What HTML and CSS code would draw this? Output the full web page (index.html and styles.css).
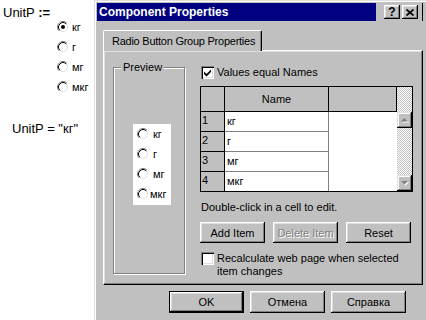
FILE: index.html
```html
<!DOCTYPE html>
<html lang="ru">
<head>
    <meta charset="UTF-8">
    <meta name="viewport" content="width=device-width, initial-scale=1.0">
    <title>Component Properties</title>
    <link rel="stylesheet" href="styles.css">
</head>
<body>
    <!-- shared glyphs -->
    <svg class="defs" width="0" height="0" aria-hidden="true">
        <symbol id="radio" viewBox="0 0 12 12">
            <circle cx="6" cy="6" r="5.5" fill="#fff" stroke="#fff"/>
            <path d="M2.11 9.89A5.5 5.5 0 0 1 9.89 2.11" fill="none" stroke="#808080"/>
            <circle cx="6" cy="6" r="4.5" fill="none" stroke="#dfdfdf"/>
            <path d="M2.82 9.18A4.5 4.5 0 0 1 9.18 2.82" fill="none" stroke="#000"/>
        </symbol>
        <symbol id="radio-on" viewBox="0 0 12 12">
            <use href="#radio"/>
            <circle cx="6" cy="6" r="2" fill="#000"/>
        </symbol>
        <symbol id="tick" viewBox="0 0 9 9">
            <path d="M1 3.5L3.5 6L8 1.5V4L3.5 8.5L1 6Z" fill="#000"/>
        </symbol>
    </svg>

    <div class="sheet">
        <!-- worksheet regions -->
        <div class="region region-def">UnitP <b>:=</b></div>

        <div class="region region-radios">
            <div class="opt"><svg class="radio"><use href="#radio-on"/></svg><span>кг</span></div>
            <div class="opt"><svg class="radio"><use href="#radio"/></svg><span>г</span></div>
            <div class="opt"><svg class="radio"><use href="#radio"/></svg><span>мг</span></div>
            <div class="opt"><svg class="radio"><use href="#radio"/></svg><span>мкг</span></div>
        </div>

        <div class="region region-result">UnitP = "кг"</div>

        <!-- properties dialog -->
        <div class="dialog">
            <div class="titlebar">
                <div class="caption">Component Properties</div>
                <div class="caption-buttons">
                    <span class="cap-btn">?</span>
                    <span class="cap-btn">
                        <svg width="8" height="7" viewBox="0 0 8 7"><path d="M0.5 0.5L7.5 6.5M7.5 0.5L0.5 6.5" stroke="#000" stroke-width="1.7"/></svg>
                    </span>
                </div>
            </div>

            <div class="tabs">
                <div class="tab">Radio Button Group Properties</div>
            </div>

            <div class="panel">
                <fieldset class="group">
                    <legend>Preview</legend>
                    <div class="preview-box">
                        <div class="p-opt"><svg class="radio"><use href="#radio"/></svg><span>кг</span></div>
                        <div class="p-opt"><svg class="radio"><use href="#radio"/></svg><span>г</span></div>
                        <div class="p-opt"><svg class="radio"><use href="#radio"/></svg><span>мг</span></div>
                        <div class="p-opt p-opt-wide"><svg class="radio"><use href="#radio"/></svg><span>мкг</span></div>
                    </div>
                </fieldset>

                <div class="settings">
                    <div class="check">
                        <span class="box"><svg width="9" height="9"><use href="#tick"/></svg></span>
                        <span>Values equal Names</span>
                    </div>

                    <div class="grid">
                        <div class="table">
                            <div class="hd"></div>
                            <div class="hd">Name</div>
                            <div class="hd"></div>

                            <div class="num">1</div>
                            <div class="name">кг</div>
                            <div class="blank"></div>

                            <div class="num">2</div>
                            <div class="name">г</div>
                            <div class="blank"></div>

                            <div class="num">3</div>
                            <div class="name">мг</div>
                            <div class="blank"></div>

                            <div class="num last">4</div>
                            <div class="name last">мкг</div>
                            <div class="blank"></div>
                        </div>
                        <div class="vscroll">
                            <div class="sb-space"></div>
                            <div class="sb-btn">
                                <svg width="8" height="5" viewBox="0 0 8 5"><path d="M4.5 1L8 4.5H1Z" fill="#fff"/><path d="M3.5 0L7 3.5H0Z" fill="#808080"/></svg>
                            </div>
                            <div class="sb-track"></div>
                            <div class="sb-btn">
                                <svg width="8" height="5" viewBox="0 0 8 5"><path d="M1 1H8L4.5 4.5Z" fill="#fff"/><path d="M0 0H7L3.5 3.5Z" fill="#808080"/></svg>
                            </div>
                        </div>
                    </div>

                    <p class="hint">Double-click in a cell to edit.</p>

                    <div class="row-buttons">
                        <button class="btn">Add Item</button>
                        <button class="btn" disabled>Delete Item</button>
                        <button class="btn">Reset</button>
                    </div>

                    <div class="check check-multi">
                        <span class="box"></span>
                        <span>Recalculate web page when selected<br>item changes</span>
                    </div>
                </div>
            </div>

            <div class="footer">
                <button class="btn btn-default">OK</button>
                <button class="btn">Отмена</button>
                <button class="btn">Справка</button>
            </div>
        </div>
    </div>
</body>
</html>
```

FILE: styles.css
```css
* {
    margin: 0;
    padding: 0;
    box-sizing: border-box;
}

body {
    background: #fff;
    font-family: "Liberation Sans", Arial, sans-serif;
    font-size: 11px;
    color: #000;
    overflow: hidden;
}

.defs {
    display: block;
    width: 0;
    height: 0;
}

.sheet {
    position: relative;
    width: 426px;
    height: 320px;
    overflow: hidden;
}

/* worksheet regions sit on a free canvas */
.region {
    position: absolute;
    font-size: 13px;
    line-height: 15px;
}

.region-def {
    left: 3px;
    top: 5px;
}

.region-result {
    left: 12px;
    top: 121px;
}

.region-radios {
    left: 57px;
    top: 17px;
    font-size: 11px;
}

.opt {
    display: flex;
    align-items: center;
    height: 20px;
    gap: 3px;
}

.radio {
    width: 12px;
    height: 12px;
    flex: none;
}

/* dialog window */
.dialog {
    position: absolute;
    left: 94px;
    top: 0;
    width: 340px;
    height: 330px;
    padding: 3px;
    background: #c0c0c0;
    box-shadow: inset 1px 1px #dfdfdf, inset 2px 2px #fff, inset -1px -1px #000, inset -2px -2px #808080;
}

.titlebar {
    display: flex;
    height: 18px;
}

.caption {
    width: 279px;
    background: #000080;
    color: #fff;
    font-weight: bold;
    font-size: 12px;
    line-height: 18px;
    padding-left: 2px;
}

.caption-buttons {
    display: flex;
    align-items: center;
    gap: 2px;
    width: 47px;
    padding-left: 8px;
    border-right: 1px solid #000;
}

.cap-btn {
    display: flex;
    align-items: center;
    justify-content: center;
    width: 16px;
    height: 14px;
    font-weight: bold;
    font-size: 12px;
    box-shadow: inset -1px -1px #000, inset 1px 1px #fff, inset -2px -2px #808080, inset 2px 2px #dfdfdf;
}

.tabs {
    display: flex;
    margin-top: 9px;
    padding-left: 6px;
}

.tab {
    position: relative;
    z-index: 1;
    width: 159px;
    height: 21px;
    margin-bottom: -1px;
    padding-left: 8px;
    line-height: 20px;
    white-space: nowrap;
    letter-spacing: -0.25px;
    background: #c0c0c0;
    border-top: 1px solid #fff;
    border-left: 1px solid #fff;
    border-right: 1px solid #000;
    border-top-left-radius: 2px;
    border-top-right-radius: 2px;
    box-shadow: inset -1px 0 #808080;
}

.panel {
    display: flex;
    align-items: flex-start;
    width: 320px;
    height: 235px;
    margin-left: 6px;
    padding: 10px 0 0 9px;
    border: 1px solid;
    border-color: #fff #000 #000 #fff;
    box-shadow: inset -1px -1px #808080, inset 1px 1px #dfdfdf;
}

.group {
    width: 72px;
    height: 213px;
    border: 1px solid #808080;
    box-shadow: 1px 1px 0 #fff, inset 1px 1px 0 #fff;
}

.group legend {
    margin-left: 7px;
    padding: 0 2px;
    line-height: 13px;
    background: #c0c0c0;
}

.preview-box {
    width: 38px;
    margin: 50px 0 0 19px;
    padding-bottom: 1px;
    background: #fff;
}

.p-opt {
    display: flex;
    align-items: center;
    height: 20px;
    gap: 4px;
    padding-left: 4px;
}

.p-opt-wide {
    gap: 1px;
}

.settings {
    width: 213px;
    margin: 5px 0 0 15px;
}

.check {
    display: flex;
    align-items: center;
    gap: 3px;
    padding-left: 1px;
    line-height: 13px;
}

.box {
    display: flex;
    align-items: center;
    justify-content: center;
    width: 13px;
    height: 13px;
    flex: none;
    background: #fff;
    box-shadow: inset 1px 1px #808080, inset 2px 2px #000, inset -1px -1px #fff, inset -2px -2px #dfdfdf;
}

.grid {
    display: flex;
    height: 106px;
    margin-top: 7px;
    border: 1px solid #000;
    background: #fff;
}

.table {
    display: grid;
    grid-template-columns: 24px 104px 68px;
    grid-template-rows: 25px 20px 20px 20px 19px;
    width: 196px;
}

.hd {
    display: flex;
    align-items: center;
    justify-content: center;
    background: #c0c0c0;
    border-right: 1px solid #000;
    border-bottom: 1px solid #000;
}

.num {
    padding-left: 1px;
    line-height: 16px;
    background: #c0c0c0;
    border-right: 1px solid #000;
    border-bottom: 1px solid #000;
}

.name {
    padding-left: 2px;
    line-height: 19px;
    border-right: 1px solid #808080;
    border-bottom: 1px solid #808080;
}

.num.last,
.name.last {
    border-bottom: none;
}

.vscroll {
    display: flex;
    flex-direction: column;
    width: 16px;
    background: repeating-conic-gradient(#fff 0 25%, #c0c0c0 0 50%) 0 0 / 2px 2px;
}

.sb-space {
    height: 25px;
}

.sb-track {
    flex: 1;
}

.sb-btn {
    display: flex;
    align-items: center;
    justify-content: center;
    height: 16px;
    background: #c0c0c0;
    box-shadow: inset -1px -1px #000, inset 1px 1px #dfdfdf, inset -2px -2px #808080, inset 2px 2px #fff;
}

.hint {
    margin-top: 9px;
    padding-left: 1px;
    line-height: 13px;
}

.row-buttons {
    display: flex;
    gap: 8px;
    margin-top: 8px;
}

.btn {
    width: 65px;
    height: 21px;
    border: none;
    background: #c0c0c0;
    font-family: "Liberation Sans", Arial, sans-serif;
    font-size: 11px;
    font-weight: normal;
    color: #000;
    box-shadow: inset -1px -1px #000, inset 1px 1px #fff, inset -2px -2px #808080, inset 2px 2px #dfdfdf;
}

.btn:disabled {
    color: #808080;
    text-shadow: 1px 1px #fff;
}

.check-multi {
    align-items: flex-start;
    margin-top: 9px;
}

.footer {
    display: flex;
    gap: 6px;
    margin-top: 6px;
    padding-left: 72px;
}

.footer .btn {
    width: 75px;
    height: 22px;
}

.footer .btn-default {
    border: 1px solid #000;
}
```
